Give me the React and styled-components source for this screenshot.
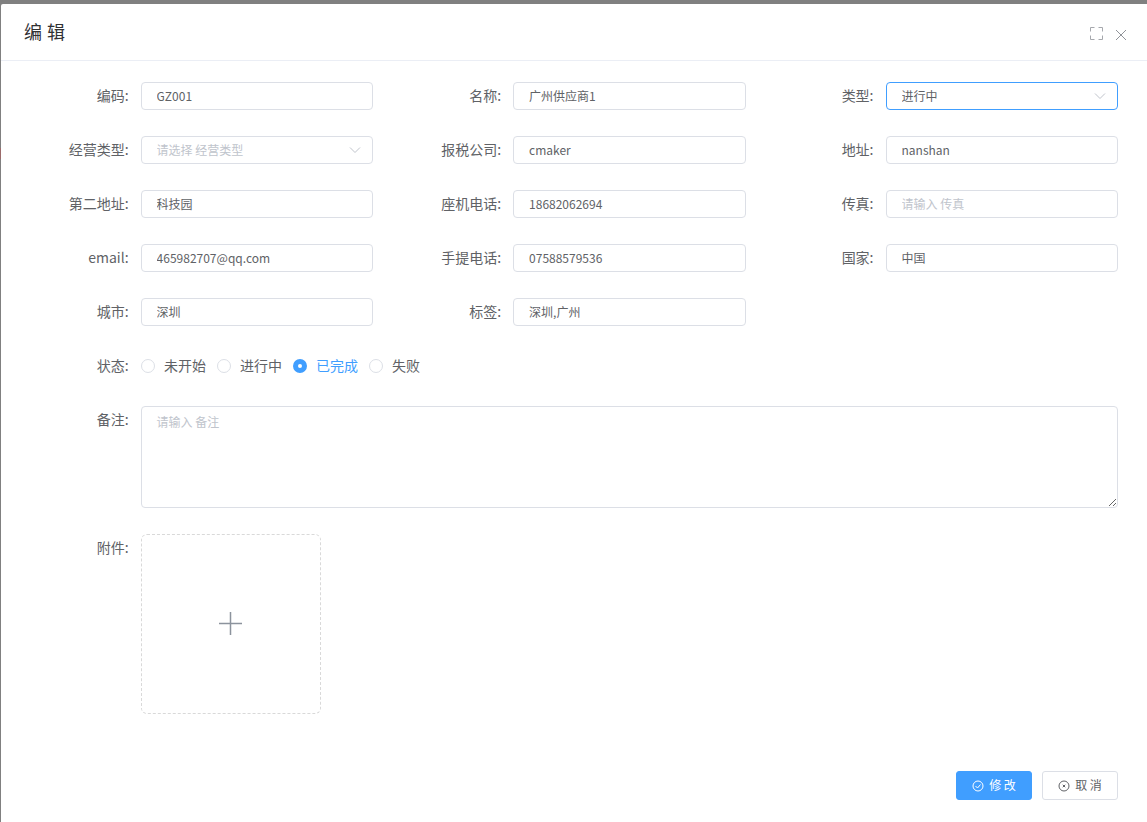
import React from 'react'
import styled, { createGlobalStyle } from 'styled-components'

const GlobalStyle = createGlobalStyle`
  html, body {
    margin: 0;
    height: 100%;
    background: #808080;
    overflow: hidden;
  }
  body {
    font-family: "Noto Sans CJK SC", sans-serif;
  }
`

// sliver of the red page content that shows under the overlay at the left edge
const BackdropMark = styled.div`
  position: absolute;
  left: 0;
  top: 148px;
  width: 1px;
  height: 11px;
  background: #9c6b6b;
`

const Dialog = styled.div`
  margin: 4px 0 0 1px;
  height: 818px;
  background: #fff;
  border-radius: 2px 0 0 0;
  display: flex;
  flex-direction: column;
`

const Header = styled.div`
  height: 56px;
  display: flex;
  align-items: center;
  justify-content: space-between;
  padding: 0 21px 0 23px;
  border-bottom: 1px solid #ebeef5;
`

const Title = styled.span`
  margin-bottom: 2px;
  font-size: 18px;
  word-spacing: 1px;
  color: #303133;
`

const HeaderIcons = styled.div`
  display: flex;
  align-items: flex-end;
  gap: 13px;
  margin-top: 3px;
  color: #909399;
`

const Form = styled.div`
  padding: 21px 29px 0 19.6px;
  display: flex;
  flex-direction: column;
  gap: 26px;
`

const Grid = styled.div`
  display: grid;
  grid-template-columns: repeat(3, 1fr);
  gap: 26px 20px;
`

const Field = styled.div`
  display: flex;
  min-width: 0;
`

const Label = styled.label`
  flex: 0 0 120px;
  box-sizing: border-box;
  padding-right: 12px;
  text-align: right;
  font-size: 14px;
  line-height: 26px;
  color: #606266;
`

const Control = styled.div`
  position: relative;
  flex: 1;
  min-width: 0;
  min-height: 28px;
  display: flex;
  align-items: center;
`

const Input = styled.input`
  width: 100%;
  height: 28px;
  box-sizing: border-box;
  padding: 0 15px 2px;
  font: inherit;
  font-size: 12px;
  line-height: 24px;
  color: #606266;
  background: #fff;
  border: 1px solid ${({ $focus }) => ($focus ? '#409eff' : '#dcdfe6')};
  border-radius: 4px;
  outline: none;
  &::placeholder {
    color: #c0c4cc;
    opacity: 1;
    line-height: 24px;
  }
`

const Chevron = styled.svg`
  position: absolute;
  right: 12px;
  top: 8px;
  width: 12px;
  height: 12px;
  fill: none;
  stroke: #c0c4cc;
  stroke-width: 1;
`

const RadioGroup = styled.div`
  display: flex;
  align-items: flex-start;
  height: 28px;
`

const Radio = styled.label`
  display: flex;
  align-items: flex-start;
  gap: 9.4px;
  margin-right: 10.6px;
  font-size: 14px;
  line-height: 26px;
  color: ${({ $on }) => ($on ? '#409eff' : '#606266')};
`

const Dot = styled.span`
  width: 14px;
  height: 14px;
  margin-top: 7px;
  box-sizing: border-box;
  border-radius: 50%;
  border: ${({ $on }) => ($on ? '5px solid #409eff' : '1px solid #dcdfe6')};
  background: #fff;
`

const TextArea = styled.textarea`
  display: block;
  width: 100%;
  height: 102px;
  box-sizing: border-box;
  padding: 5px 15px;
  font: inherit;
  font-size: 12px;
  line-height: 20px;
  color: #606266;
  border: 1px solid #dcdfe6;
  border-radius: 4px;
  outline: none;
  &::placeholder {
    color: #c0c4cc;
    opacity: 1;
  }
`

const Upload = styled.div`
  width: 180px;
  height: 180px;
  box-sizing: border-box;
  display: flex;
  align-items: center;
  justify-content: center;
  border: 1px dashed #d9d9d9;
  border-radius: 6px;
`

const Footer = styled.div`
  margin-top: 57px;
  padding-right: 29px;
  display: flex;
  justify-content: flex-end;
  gap: 10px;
`

const Button = styled.button`
  width: 76px;
  height: 29px;
  box-sizing: border-box;
  display: flex;
  align-items: center;
  justify-content: center;
  gap: 5px;
  padding: 0;
  font: inherit;
  font-size: 12px;
  border-radius: 3px;
  border: 1px solid ${({ $primary }) => ($primary ? '#409eff' : '#dcdfe6')};
  background: ${({ $primary }) => ($primary ? '#409eff' : '#fff')};
  color: ${({ $primary }) => ($primary ? '#fff' : '#606266')};
`

const ButtonText = styled.span`
  margin-bottom: 2px;
`

const FullscreenIcon = () => (
  <svg width="13" height="13" viewBox="0 0 13 13" fill="none" stroke="currentColor" opacity="0.8">
    <path d="M.5 4.5v-4h4M8.5.5h4v4M12.5 8.5v4h-4M4.5 12.5h-4v-4" />
  </svg>
)

const CloseIcon = () => (
  <svg width="10" height="10" viewBox="0 0 10 10" fill="none" stroke="currentColor">
    <path d="M0 0l10 10M10 0L0 10" />
  </svg>
)

const PlusIcon = () => (
  <svg width="24" height="24" viewBox="0 0 24 24" fill="none" stroke="#8c939d" strokeWidth="1.5">
    <path d="M0 11.5h23M11.5 0v23" />
  </svg>
)

const CheckCircle = () => (
  <svg width="12" height="12" viewBox="0 0 12 12" fill="none" stroke="currentColor">
    <circle cx="6" cy="6" r="5" />
    <path d="M3.5 6l2 2 3-3.5" />
  </svg>
)

const CancelCircle = () => (
  <svg width="12" height="12" viewBox="0 0 12 12" fill="none" stroke="currentColor">
    <circle cx="6" cy="6" r="5" />
    <path d="M4.75 4.75l2.5 2.5M7.25 4.75l-2.5 2.5" />
  </svg>
)

const fields = [
  { label: '编码:', value: 'GZ001' },
  { label: '名称:', value: '广州供应商1' },
  { label: '类型:', value: '进行中', select: true, focus: true },
  { label: '经营类型:', placeholder: '请选择 经营类型', select: true },
  { label: '报税公司:', value: 'cmaker' },
  { label: '地址:', value: 'nanshan' },
  { label: '第二地址:', value: '科技园' },
  { label: '座机电话:', value: '18682062694' },
  { label: '传真:', placeholder: '请输入 传真' },
  { label: 'email:', value: '465982707@qq.com' },
  { label: '手提电话:', value: '07588579536' },
  { label: '国家:', value: '中国' },
  { label: '城市:', value: '深圳' },
  { label: '标签:', value: '深圳,广州' },
]

const statuses = ['未开始', '进行中', '已完成', '失败']

export default function App() {
  return (
    <>
      <GlobalStyle />
      <BackdropMark />
      <Dialog>
        <Header>
          <Title>编 辑</Title>
          <HeaderIcons>
            <FullscreenIcon />
            <CloseIcon />
          </HeaderIcons>
        </Header>
        <Form>
          <Grid>
            {fields.map((f) => (
              <Field key={f.label}>
                <Label>{f.label}</Label>
                <Control>
                  <Input readOnly $focus={f.focus} defaultValue={f.value} placeholder={f.placeholder} />
                  {f.select && (
                    <Chevron viewBox="0 0 12 12">
                      <path d="M1 3.5l5 5 5-5" />
                    </Chevron>
                  )}
                </Control>
              </Field>
            ))}
          </Grid>
          <Field>
            <Label>状态:</Label>
            <RadioGroup>
              {statuses.map((s) => (
                <Radio key={s} $on={s === '已完成'}>
                  <Dot $on={s === '已完成'} />
                  {s}
                </Radio>
              ))}
            </RadioGroup>
          </Field>
          <Field>
            <Label>备注:</Label>
            <Control>
              <TextArea readOnly placeholder="请输入 备注" />
            </Control>
          </Field>
          <Field>
            <Label>附件:</Label>
            <Upload>
              <PlusIcon />
            </Upload>
          </Field>
        </Form>
        <Footer>
          <Button $primary>
            <CheckCircle />
            <ButtonText>修 改</ButtonText>
          </Button>
          <Button>
            <CancelCircle />
            <ButtonText>取 消</ButtonText>
          </Button>
        </Footer>
      </Dialog>
    </>
  )
}
